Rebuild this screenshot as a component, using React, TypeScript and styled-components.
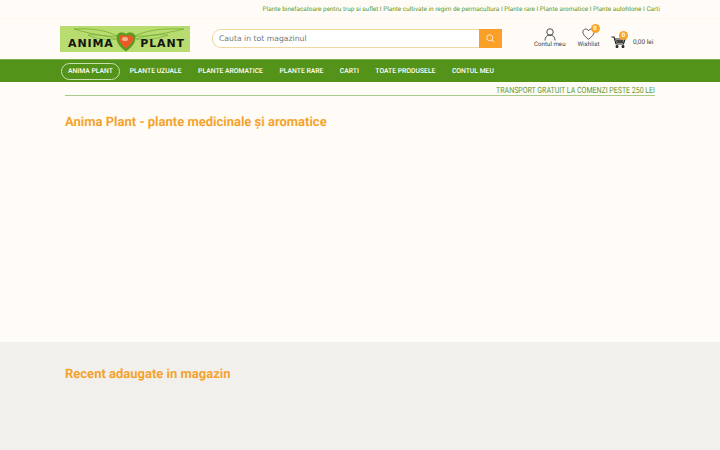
import React from 'react';
import styled, { createGlobalStyle } from 'styled-components';

const GlobalStyle = createGlobalStyle`
  html, body {
    margin: 0;
    padding: 0;
    background: #fffcf7;
    font-family: "Roboto", "Liberation Sans", sans-serif;
    text-rendering: geometricPrecision;
    overflow: hidden;
  }
`;

const Page = styled.div`
  width: 720px;
  height: 450px;
  display: flex;
  flex-direction: column;
  overflow: hidden;
`;

const TopBar = styled.div`
  height: 18px;
  padding: 0 60px 0 0;
  display: flex;
  align-items: center;
  justify-content: flex-end;
  font-size: 6.4px;
  color: #5b9a2b;
  white-space: nowrap;
  border-bottom: 1px solid #fbf8f1;
`;

const Header = styled.header`
  height: 40px;
  padding: 7px 0 0 60px;
  box-sizing: border-box;
  display: flex;
  align-items: flex-start;
`;

const Logo = styled.div`
  width: 130px;
  height: 26px;
  background: #b8dc70;
  position: relative;
  overflow: hidden;
  flex: none;
`;

const LogoArt = styled.svg`
  position: absolute;
  inset: 0;
`;

const LogoText = styled.div`
  position: absolute;
  left: 8px;
  right: 5px;
  bottom: 3px;
  display: flex;
  justify-content: space-between;
  font-family: "DejaVu Sans", sans-serif;
  font-weight: 700;
  font-size: 11px;
  line-height: 10px;
  letter-spacing: 0.9px;
  color: #121510;
`;

const Search = styled.div`
  margin: 3px 0 0 22px;
  width: 290px;
  height: 19px;
  display: flex;
  flex: none;
`;

const SearchField = styled.div`
  flex: 1;
  border: 1px solid #efd9a0;
  border-right: none;
  border-radius: 9px 0 0 9px;
  background: #fff;
  padding-left: 6px;
  font-family: "DejaVu Sans", sans-serif;
  font-size: 7.7px;
  line-height: 17px;
  color: #777;
`;

const SearchButton = styled.div`
  width: 23px;
  background: #fa9f28;
  display: flex;
  align-items: center;
  justify-content: center;
`;

const Actions = styled.div`
  margin-left: 32px;
  display: flex;
  align-items: flex-start;
`;

const Action = styled.div<{ $gap: number }>`
  margin: 2px 0 0 ${(p) => p.$gap}px;
  display: flex;
  flex-direction: column;
  align-items: center;
  font-size: 6.2px;
  line-height: 8px;
  color: #444;
  white-space: nowrap;
  position: relative;
`;

const ActionLabel = styled.span`
  margin-top: -1px;
`;

const Badge = styled.span<{ $left: number; $top: number }>`
  position: absolute;
  left: ${(p) => p.$left}px;
  top: ${(p) => p.$top}px;
  width: 9px;
  height: 9px;
  border-radius: 50%;
  background: #f9a52e;
  color: #fff;
  font-size: 6px;
  font-weight: 700;
  line-height: 9px;
  text-align: center;
`;

const Cart = styled.div`
  margin: 10px 0 0 11.5px;
  display: flex;
  align-items: center;
  gap: 7px;
  font-size: 6.5px;
  color: #444;
  white-space: nowrap;
  position: relative;
`;

const Nav = styled.nav`
  height: 23px;
  box-sizing: border-box;
  border-top: 1px solid #7fae4e;
  background: #54931a;
  padding-left: 61px;
  display: flex;
  align-items: center;
`;

const NavItem = styled.a<{ $active?: boolean }>`
  height: 17px;
  box-sizing: border-box;
  padding: 0 ${(p) => (p.$active ? '6px' : '8.2px')};
  margin-left: ${(p) => (p.$active ? '0' : '0.1px')};
  margin-right: ${(p) => (p.$active ? '1.5px' : '0')};
  border: ${(p) => (p.$active ? '1px solid #c9dfb2' : 'none')};
  border-radius: 9px;
  color: #fff;
  font-size: 6.8px;
  font-weight: 500;
  display: flex;
  align-items: center;
  white-space: nowrap;
`;

const Content = styled.main`
  height: 260px;
  padding: 0 65px;
  display: flex;
  flex-direction: column;
`;

const Promo = styled.div`
  height: 13px;
  border-bottom: 1px solid #a9c98a;
  text-align: right;
  font-size: 8.6px;
  line-height: 18px;
  color: #5f9a35;
  white-space: nowrap;
`;

const PromoText = styled.span`
  display: inline-block;
  transform: scaleX(0.815);
  transform-origin: right center;
`;

const Title = styled.h1`
  margin: 18px 0 0;
  font-size: 13px;
  line-height: 18px;
  font-weight: 700;
  color: #f4a32f;
`;

const Recent = styled.section`
  flex: 1;
  background: #f1f0ec;
  padding: 24px 65px 0;
`;

const RecentTitle = styled.h2`
  margin: 0;
  font-size: 13px;
  line-height: 18px;
  font-weight: 700;
  color: #f4a32f;
`;

const navItems = ['PLANTE UZUALE', 'PLANTE AROMATICE', 'PLANTE RARE', 'CARTI', 'TOATE PRODUSELE', 'CONTUL MEU'];

const App = () => {
  return (
    <Page>
      <GlobalStyle />
      <TopBar>
        Plante binefacatoare pentru trup si suflet I Plante cultivate in regim de permacultura I Plante rare I Plante aromatice I Plante autohtone I Carti
      </TopBar>
      <Header>
        <Logo>
          <LogoArt width="130" height="26" viewBox="0 0 130 26" fill="none">
            <path d="M14 3 C30 2 46 4 57 10 C44 11 32 8 14 3Z" stroke="#6ea62f" strokeWidth="0.7" />
            <path d="M28 9 C38 8 48 10 56 13 C46 14 36 13 28 9Z" stroke="#6ea62f" strokeWidth="0.6" />
            <path d="M124 3 C104 2 87 4 75 10 C88 11 102 8 124 3Z" stroke="#6ea62f" strokeWidth="0.7" />
            <path d="M108 9 C96 8 84 10 76 13 C86 14 98 13 108 9Z" stroke="#6ea62f" strokeWidth="0.6" />
            <path d="M66 25.500 C60 21 56.500 17 56.500 11.500 C56.500 7 62 5 66 8 C70 5 75.500 7 75.500 11.500 C75.500 17 72 21 66 25.500Z" fill="#5d9a22" />
            <path d="M66 22.500 C62 19 59 16 59 12.500 C59 9 63 8 66 10 C69 8 73 9 73 12.500 C73 16 70 19 66 22.500Z" fill="#ea5a27" />
            <ellipse cx="65" cy="13" rx="3" ry="2" fill="#f7b08e" />
          </LogoArt>
          <LogoText>
            <span>ANIMA</span>
            <span>PLANT</span>
          </LogoText>
        </Logo>
        <Search>
          <SearchField>Cauta in tot magazinul</SearchField>
          <SearchButton>
            <svg width="9" height="9" viewBox="0 0 24 24" fill="none" stroke="#fff" strokeWidth="2">
              <circle cx="10" cy="10" r="8" />
              <path d="M16 16l6 6" />
            </svg>
          </SearchButton>
        </Search>
        <Actions>
          <Action $gap={0}>
            <svg width="12" height="13" viewBox="0 0 24 26" fill="none" stroke="#333" strokeWidth="1.7">
              <circle cx="12" cy="8" r="6.5" />
              <path d="M2 25c0-7 4-11 10-11s10 4 10 11" />
            </svg>
            <ActionLabel>Contul meu</ActionLabel>
          </Action>
          <Action $gap={12}>
            <svg width="13" height="13" viewBox="0 0 24 24" fill="none" stroke="#333" strokeWidth="1.5">
              <path d="M12 21C6 16 1.500 12 1.500 7.500 1.500 4 4 2 7 2c2 0 4 1 5 3 1-2 3-3 5-3 3 0 5.500 2 5.500 5.500C22.500 12 18 16 12 21Z" />
            </svg>
            <ActionLabel>Wishlist</ActionLabel>
            <Badge $left={13} $top={-4}>0</Badge>
          </Action>
          <Cart>
            <svg width="15" height="12" viewBox="0 0 30 24" fill="none" stroke="#222" strokeWidth="2.4">
              <path d="M1 2h5l4 14h15l3-10H8" />
              <path d="M10 8h15v6H11z" fill="#444" stroke="none" />
              <circle cx="12" cy="21" r="1.800" fill="#222" />
              <circle cx="24" cy="21" r="1.800" fill="#222" />
            </svg>
            <span>0,00 lei</span>
            <Badge $left={8} $top={-5}>0</Badge>
          </Cart>
        </Actions>
      </Header>
      <Nav>
        <NavItem $active>ANIMA PLANT</NavItem>
        {navItems.map((item) => (
          <NavItem key={item}>{item}</NavItem>
        ))}
      </Nav>
      <Content>
        <Promo>
          <PromoText>TRANSPORT GRATUIT LA COMENZI PESTE 250 LEI</PromoText>
        </Promo>
        <Title>Anima Plant - plante medicinale și aromatice</Title>
      </Content>
      <Recent>
        <RecentTitle>Recent adaugate in magazin</RecentTitle>
      </Recent>
    </Page>
  );
};

export default App;
